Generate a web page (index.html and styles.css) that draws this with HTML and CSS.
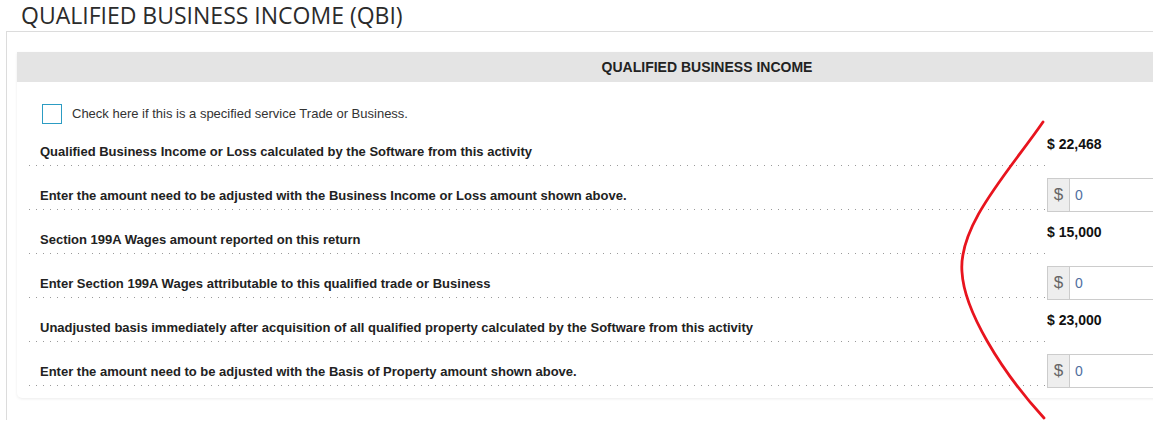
FILE: index.html
```html
<!DOCTYPE html>
<html lang="en">
<head>
  <meta charset="UTF-8" />
  <title>Qualified Business Income (QBI)</title>
  <link rel="stylesheet" href="styles.css">
</head>
<body>

<h1 class="page-title">QUALIFIED BUSINESS INCOME (QBI)</h1>

<div class="panel">
  <div class="card">
    <div class="card-head">QUALIFIED BUSINESS INCOME</div>
    <div class="card-body">

      <label class="check-row">
        <span class="check-box"></span>
        <span class="check-text">Check here if this is a specified service Trade or Business.</span>
      </label>

      <div class="field-row">
        <div class="field-label">Qualified Business Income or Loss calculated by the Software from this activity</div>
        <div class="field-value"><span class="amount">$ 22,468</span></div>
      </div>

      <div class="field-row">
        <div class="field-label">Enter the amount need to be adjusted with the Business Income or Loss amount shown above.</div>
        <div class="field-value">
          <div class="money-input"><span class="addon">$</span><input type="text" value="0"></div>
        </div>
      </div>

      <div class="field-row">
        <div class="field-label">Section 199A Wages amount reported on this return</div>
        <div class="field-value"><span class="amount">$ 15,000</span></div>
      </div>

      <div class="field-row">
        <div class="field-label">Enter Section 199A Wages attributable to this qualified trade or Business</div>
        <div class="field-value">
          <div class="money-input"><span class="addon">$</span><input type="text" value="0"></div>
        </div>
      </div>

      <div class="field-row">
        <div class="field-label">Unadjusted basis immediately after acquisition of all qualified property calculated by the Software from this activity</div>
        <div class="field-value"><span class="amount">$ 23,000</span></div>
      </div>

      <div class="field-row">
        <div class="field-label">Enter the amount need to be adjusted with the Basis of Property amount shown above.</div>
        <div class="field-value">
          <div class="money-input"><span class="addon">$</span><input type="text" value="0"></div>
        </div>
      </div>

    </div>
  </div>
</div>

<!-- hand drawn annotation on top of the form -->
<svg class="scribble" width="1153" height="428" viewBox="0 0 1153 428">
  <path d="M1043 122 C1010 170 958 225 962 272 C964 310 1000 370 1044 418" fill="none" stroke="#e8141e" stroke-width="2.8" stroke-linecap="round"/>
</svg>

</body>
</html>
```

FILE: styles.css
```css
* { box-sizing: border-box; margin: 0; padding: 0; }

html, body {
  background: #fff;
  color: #333;
  font-family: 'Liberation Sans', Arial, sans-serif;
  overflow: hidden;
}

body {
  width: 1153px;
  height: 428px;
  position: relative;
}

.page-title {
  font-family: 'Open Sans', 'Noto Sans', sans-serif;
  font-weight: 400;
  font-size: 23px;
  line-height: 31px;
  color: #2b2b2b;
  padding-left: 21px;
  white-space: nowrap;
}

.panel {
  margin-left: 6px;
  height: 389px;
  border-top: 1px solid #dcdcdc;
  border-left: 1px solid #dcdcdc;
  padding: 20px 0 0 10px;
  overflow: hidden;
}

.card {
  width: 1380px;
  border-radius: 0 0 5px 5px;
  box-shadow: 0 1px 3px rgba(0, 0, 0, 0.08);
}

.card-head {
  height: 30px;
  line-height: 30px;
  background: #e4e4e4;
  text-align: center;
  font-weight: bold;
  font-size: 14px;
  color: #222;
}

.card-body {
  padding: 0 0 12px 11px;
}

.check-row {
  display: flex;
  align-items: flex-start;
  height: 40px;
  padding: 22px 0 0 14px;
}

.check-box {
  flex-shrink: 0;
  width: 20px;
  height: 20px;
  border: 1.5px solid #2c9cc3;
}

.check-text {
  margin-left: 10px;
  font-size: 13px;
  line-height: 20px;
  color: #333;
}

.field-row {
  display: flex;
  height: 44px;
}

.field-label {
  flex: 0 0 1019px;
  display: flex;
  align-items: flex-end;
  padding: 0 0 6px 12px;
  font-size: 13px;
  line-height: 16px;
  font-weight: bold;
  color: #222;
  background: linear-gradient(to right, #9a9a9a 1px, transparent 1px) 1px 100% / 7px 1px repeat-x;
}

.field-value {
  flex: 1;
  padding-top: 12px;
}

.amount {
  display: block;
  padding-top: 2px;
  font-size: 14px;
  line-height: 16px;
  font-weight: bold;
  color: #111;
}

.money-input {
  display: flex;
  height: 34px;
  width: 200px;
  border: 1px solid #cccccc;
}

.addon {
  flex: 0 0 22px;
  background: #eeeeee;
  border-right: 1px solid #cccccc;
  color: #666;
  font-size: 17px;
  line-height: 32px;
  text-align: center;
}

.money-input input {
  flex: 1;
  min-width: 0;
  width: 0;
  border: 0;
  outline: none;
  padding-left: 5px;
  font-family: 'Liberation Sans', Arial, sans-serif;
  font-size: 14px;
  color: #4f6f9f;
  background: #fff;
}

.scribble {
  position: absolute;
  top: 0;
  left: 0;
  pointer-events: none;
}
```
